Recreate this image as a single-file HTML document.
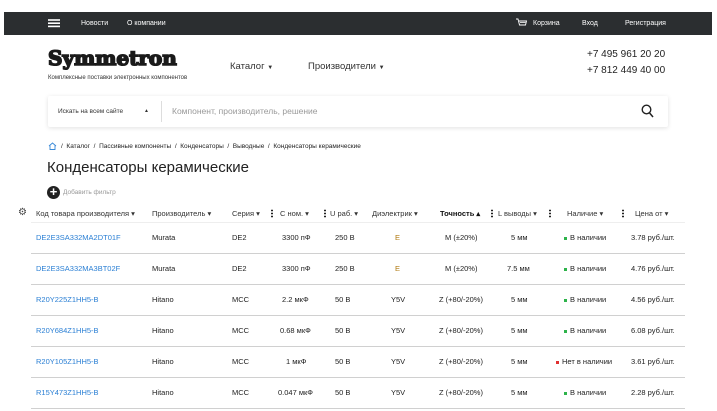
<!DOCTYPE html>
<html><head><meta charset="utf-8">
<style>
*{margin:0;padding:0;box-sizing:border-box}
body{width:717px;height:411px;overflow:hidden;background:#fff;font-family:"Liberation Sans",sans-serif;color:#222;position:relative}
.a{position:absolute;white-space:nowrap}
.top{position:absolute;left:4px;top:12px;width:708px;height:23px;background:#2b2e30}
.top .a{color:#fff;font-size:7px;top:8px}
.hl{position:absolute;left:31px;width:654px;height:1px;background:#d0d0d0}
.th{font-size:7.5px;color:#333;top:209px}
.td{font-size:7.5px;color:#222}
.lnk{color:#2a7fd4}
.dots{position:absolute;width:2px;height:9px;top:209px;background:
radial-gradient(circle,#222 0.9px,transparent 1px) 0 0/2px 3px repeat-y}
.g{display:inline-block;width:3px;height:3px;background:#2db34a;margin-right:3px;vertical-align:middle}
.r{display:inline-block;width:3px;height:3px;background:#e03030;margin-right:3px;vertical-align:middle}
</style></head><body>
<div class="top">
 <div style="position:absolute;left:44px;top:7px;width:12px;height:2px;background:#fff;box-shadow:0 4px 0 #fff,0 8px 0 #fff;transform:scaleY(0.8)"></div>
 <div class="a" style="left:77px">Новости</div>
 <div class="a" style="left:123px">О компании</div>
 <svg class="a" style="left:512px;top:6px" width="11" height="10" viewBox="0 0 11 10"><path d="M0 1h2l1.5 6h6l1-4H3" fill="none" stroke="#fff" stroke-width="0.9"/><path d="M4 4.5h5.5" stroke="#fff" stroke-width="0.8"/></svg>
 <div class="a" style="left:529px">Корзина</div>
 <div class="a" style="left:578px">Вход</div>
 <div class="a" style="left:621px">Регистрация</div>
</div>
<div class="a" style="left:48px;top:46px;font-family:'DejaVu Serif','Liberation Serif',serif;font-weight:bold;font-size:20px;letter-spacing:0px;color:#1a1a1a;-webkit-text-stroke:1.6px #1a1a1a">Symmetron</div>
<div class="a" style="left:48px;top:75px;font-size:6px;color:#333">Комплексные поставки электронных компонентов</div>
<div class="a" style="left:230px;top:61px;font-size:9.5px;color:#333">Каталог <span style="font-size:6px">▼</span></div>
<div class="a" style="left:308px;top:61px;font-size:9.5px;color:#333">Производители <span style="font-size:6px">▼</span></div>
<div class="a" style="left:587px;top:49px;font-size:10px;color:#222">+7 495 961 20 20</div>
<div class="a" style="left:587px;top:65px;font-size:10px;color:#222">+7 812 449 40 00</div>
<div style="position:absolute;left:48px;top:96px;width:620px;height:31px;background:#fff;box-shadow:0 1px 5px rgba(0,0,0,0.12);border-radius:2px">
 <div class="a" style="left:10px;top:12px;font-size:6.5px;color:#333">Искать на всем сайте</div>
 <div class="a" style="left:96px;top:12px;font-size:5px;color:#333">▲</div>
 <div style="position:absolute;left:113px;top:5px;width:1px;height:21px;background:#ddd"></div>
 <div class="a" style="left:124px;top:10px;font-size:8.5px;color:#999">Компонент, производитель, решение</div>
 <svg class="a" style="left:593px;top:8px" width="13" height="14" viewBox="0 0 13 14"><circle cx="5.5" cy="5.5" r="4.3" fill="none" stroke="#222" stroke-width="1.4"/><path d="M8.6 9l3.4 4" stroke="#222" stroke-width="1.5"/></svg>
</div>
<svg class="a" style="left:48px;top:142px" width="9" height="8" viewBox="0 0 9 8"><path d="M1 4L4.5 1 8 4M2 3.5V7.5h5V3.5" fill="none" stroke="#3a8ad8" stroke-width="0.9"/></svg>
<div class="a" style="left:61px;top:143px;font-size:6.5px;color:#222">/&nbsp; Каталог &nbsp;/&nbsp; Пассивные компоненты &nbsp;/&nbsp; Конденсаторы &nbsp;/&nbsp; Выводные &nbsp;/&nbsp; Конденсаторы керамические</div>
<div class="a" style="left:47px;top:159px;font-size:15px;color:#222">Конденсаторы керамические</div>
<div class="a" style="left:47px;top:186px;width:13px;height:13px;border-radius:50%;background:#222;color:#fff;font-size:13px;line-height:12px;text-align:center;font-weight:bold">+</div>
<div class="a" style="left:63px;top:189px;font-size:6.5px;color:#999">Добавить фильтр</div>
<div class="a" style="left:18px;top:207px;font-size:10px;color:#444">⚙</div>
<div class="a th" style="left:36px">Код товара производителя ▾</div>
<div class="a th" style="left:152px">Производитель ▾</div>
<div class="a th" style="left:232px">Серия ▾</div>
<div class="dots" style="left:271px"></div>
<div class="a th" style="left:280px">С ном. ▾</div>
<div class="dots" style="left:324px"></div>
<div class="a th" style="left:330px">U раб. ▾</div>
<div class="a th" style="left:372px">Диэлектрик ▾</div>
<div class="a th" style="left:440px;font-weight:bold;color:#111">Точность ▴</div>
<div class="dots" style="left:491px"></div>
<div class="a th" style="left:498px">L выводы ▾</div>
<div class="dots" style="left:549px"></div>
<div class="a th" style="left:567px">Наличие ▾</div>
<div class="dots" style="left:622px"></div>
<div class="a th" style="left:635px">Цена от ▾</div>
<div class="hl" style="top:222px;background:#eee"></div>

<div class="hl" style="top:253px"></div>
<div class="hl" style="top:284px"></div>
<div class="hl" style="top:315px"></div>
<div class="hl" style="top:346px"></div>
<div class="hl" style="top:377px"></div>
<div class="hl" style="top:408px"></div>

<div class="a td lnk" style="left:36px;top:233px">DE2E3SA332MA2DT01F</div>
<div class="a td" style="left:152px;top:233px">Murata</div>
<div class="a td" style="left:232px;top:233px">DE2</div>
<div class="a td" style="left:282px;top:233px">3300 пФ</div>
<div class="a td" style="left:335px;top:233px">250 В</div>
<div class="a td" style="left:395px;top:233px;color:#b07a10">E</div>
<div class="a td" style="left:445px;top:233px">M (±20%)</div>
<div class="a td" style="left:511px;top:233px">5 мм</div>
<div class="a td" style="left:564px;top:233px"><span class="g"></span>В наличии</div>
<div class="a td" style="left:631px;top:233px">3.78 руб./шт.</div>

<div class="a td lnk" style="left:36px;top:264px">DE2E3SA332MA3BT02F</div>
<div class="a td" style="left:152px;top:264px">Murata</div>
<div class="a td" style="left:232px;top:264px">DE2</div>
<div class="a td" style="left:282px;top:264px">3300 пФ</div>
<div class="a td" style="left:335px;top:264px">250 В</div>
<div class="a td" style="left:395px;top:264px;color:#b07a10">E</div>
<div class="a td" style="left:445px;top:264px">M (±20%)</div>
<div class="a td" style="left:507px;top:264px">7.5 мм</div>
<div class="a td" style="left:564px;top:264px"><span class="g"></span>В наличии</div>
<div class="a td" style="left:631px;top:264px">4.76 руб./шт.</div>

<div class="a td lnk" style="left:36px;top:295px">R20Y225Z1HH5-B</div>
<div class="a td" style="left:152px;top:295px">Hitano</div>
<div class="a td" style="left:232px;top:295px">MCC</div>
<div class="a td" style="left:282px;top:295px">2.2 мкФ</div>
<div class="a td" style="left:335px;top:295px">50 В</div>
<div class="a td" style="left:391px;top:295px">Y5V</div>
<div class="a td" style="left:439px;top:295px">Z (+80/-20%)</div>
<div class="a td" style="left:511px;top:295px">5 мм</div>
<div class="a td" style="left:564px;top:295px"><span class="g"></span>В наличии</div>
<div class="a td" style="left:631px;top:295px">4.56 руб./шт.</div>

<div class="a td lnk" style="left:36px;top:326px">R20Y684Z1HH5-B</div>
<div class="a td" style="left:152px;top:326px">Hitano</div>
<div class="a td" style="left:232px;top:326px">MCC</div>
<div class="a td" style="left:280px;top:326px">0.68 мкФ</div>
<div class="a td" style="left:335px;top:326px">50 В</div>
<div class="a td" style="left:391px;top:326px">Y5V</div>
<div class="a td" style="left:439px;top:326px">Z (+80/-20%)</div>
<div class="a td" style="left:511px;top:326px">5 мм</div>
<div class="a td" style="left:564px;top:326px"><span class="g"></span>В наличии</div>
<div class="a td" style="left:631px;top:326px">6.08 руб./шт.</div>

<div class="a td lnk" style="left:36px;top:357px">R20Y105Z1HH5-B</div>
<div class="a td" style="left:152px;top:357px">Hitano</div>
<div class="a td" style="left:232px;top:357px">MCC</div>
<div class="a td" style="left:286px;top:357px">1 мкФ</div>
<div class="a td" style="left:335px;top:357px">50 В</div>
<div class="a td" style="left:391px;top:357px">Y5V</div>
<div class="a td" style="left:439px;top:357px">Z (+80/-20%)</div>
<div class="a td" style="left:511px;top:357px">5 мм</div>
<div class="a td" style="left:556px;top:357px"><span class="r"></span>Нет в наличии</div>
<div class="a td" style="left:631px;top:357px">3.61 руб./шт.</div>

<div class="a td lnk" style="left:36px;top:388px">R15Y473Z1HH5-B</div>
<div class="a td" style="left:152px;top:388px">Hitano</div>
<div class="a td" style="left:232px;top:388px">MCC</div>
<div class="a td" style="left:278px;top:388px">0.047 мкФ</div>
<div class="a td" style="left:335px;top:388px">50 В</div>
<div class="a td" style="left:391px;top:388px">Y5V</div>
<div class="a td" style="left:439px;top:388px">Z (+80/-20%)</div>
<div class="a td" style="left:511px;top:388px">5 мм</div>
<div class="a td" style="left:564px;top:388px"><span class="g"></span>В наличии</div>
<div class="a td" style="left:631px;top:388px">2.28 руб./шт.</div>
</body></html>
